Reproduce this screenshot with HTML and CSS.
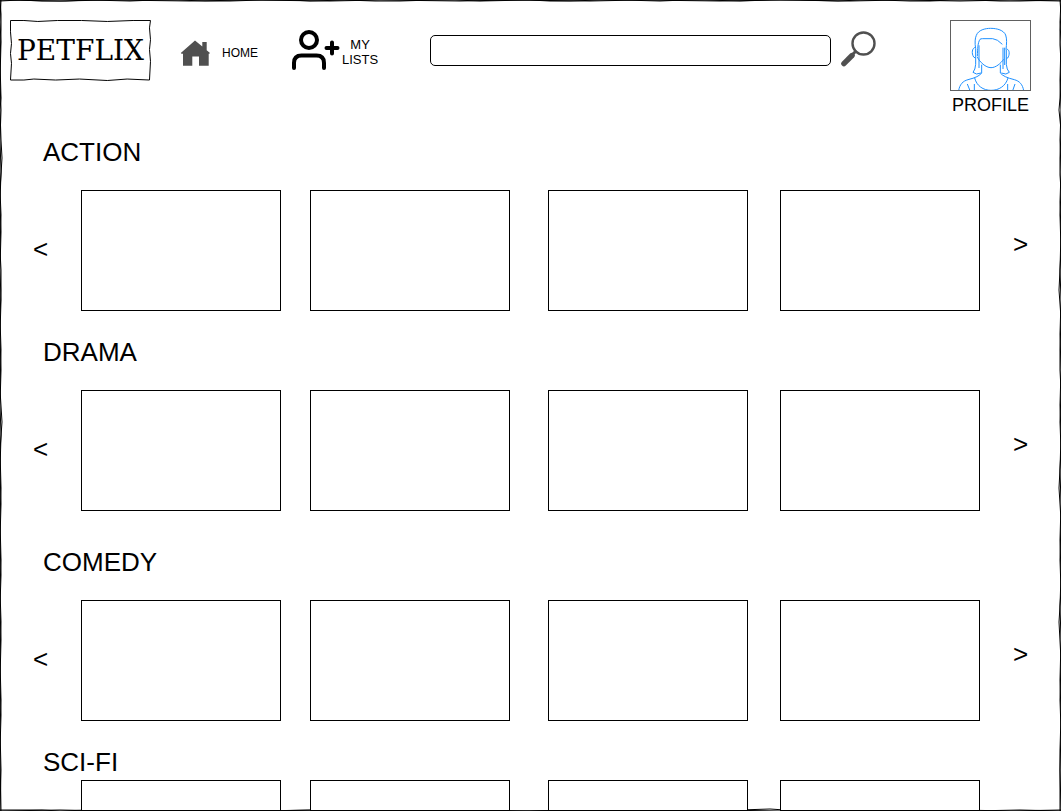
FILE: index.html
```html
<!DOCTYPE html>
<html lang="en">
<head>
<meta charset="utf-8">
<meta name="viewport" content="width=device-width, initial-scale=1">
<title>Petflix</title>
<link rel="stylesheet" href="styles.css">
</head>
<body>
<div class="page">
  <svg class="sketch" viewBox="0 0 1061 811" preserveAspectRatio="none" aria-hidden="true">
    <path d="M0 1 L20 0 42 1 66 1 90 0 130 1 155 0 178 0 205 1 230 1 262 0 290 0 310 1 345 0 375 1 400 1 432 0 455 0 480 1 530 0 550 1 570 1 600 0 622 0 660 1 685 0 705 0 740 1 770 0 800 0 838 1 860 0 880 0 910 1 930 1 950 0 972 0 1000 1 1020 1 1061 0"/>
    <path d="M0 0 L60 1 110 0 190 1 250 0 330 1 380 0 460 1 510 0 590 1 640 0 720 1 780 0 850 1 900 0 960 1 1010 0 1061 1"/>
    <path d="M1060 0 L1061 14 1060 30 1060 45 1061 62 1060 98 1059 110 1061 130 1060 158 1060 175 1061 190 1060 215 1061 250 1059 290 1061 318 1060 350 1060 370 1061 390 1060 422 1061 450 1059 488 1061 520 1060 560 1061 590 1059 622 1061 660 1060 700 1061 730 1060 770 1061 811"/>
    <path d="M1061 0 L1060 22 1061 42 1060 80 1061 110 1060 140 1061 172 1060 202 1061 232 1060 270 1061 300 1060 334 1061 370 1060 405 1061 435 1060 470 1061 504 1060 540 1061 575 1060 606 1061 640 1060 680 1061 715 1060 750 1060 811"/>
    <path d="M0 0 L1 14 1 30 0 62 1 98 0 110 1 140 2 158 0 190 1 215 0 250 1 270 1 290 0 318 1 350 0 390 2 422 0 450 1 488 0 520 1 560 0 590 1 622 0 660 1 700 0 730 1 770 0 811"/>
    <path d="M1 0 L0 22 1 42 0 80 1 110 0 140 1 172 0 202 1 232 0 270 1 300 0 334 1 370 0 405 1 435 0 470 1 504 0 540 1 575 0 606 1 640 0 680 1 715 0 750 1 811"/>
    <path d="M0 810 L42 810 60 811 90 810 130 810 178 811 230 810 262 811 310 810 345 811 400 810 432 811 480 810 530 811 570 810 622 811 660 810 705 811 740 810 770 809 800 811 838 810 880 811 930 810 972 811 1020 810 1061 811"/>
    <path d="M0 811 L60 810 110 811 190 810 250 811 330 810 380 811 460 810 510 811 590 810 640 811 720 810 780 811 850 810 900 811 960 810 1010 811 1061 810"/>
  </svg>

  <header class="header">
    <div class="bar">
      <a class="logo" href="#">
        <svg class="sketch" viewBox="0 0 142 62" preserveAspectRatio="none" aria-hidden="true">
          <path d="M.5 .5 L14 .5 28 1.500 48 .5 72 .5 98 1.500 124 .5 141.500 .5 140.500 8 141.500 20 140.500 30 141.500 42 140.500 61 118 60 98 61.500 70 60 46 61 24 60 14 61 .5 61 1.500 44 .5 34 1.500 24 .5 12Z"/>
        </svg>
        PETFLIX
      </a>
      <nav class="nav" aria-label="Main">
        <a class="nav-link home" href="#">
          <svg width="30" height="26" viewBox="0 0 30 26" aria-hidden="true">
            <path fill="#505050" d="M15 .5 22.300 6.500V2H26.700V10.300L30 12.900 29.200 13.700H28.700V25.700H19V16.500H12.300V25.700H3V13.700H1.500L.8 12.900Z"/>
          </svg>
          <span>HOME</span>
        </a>
        <a class="nav-link lists" href="#">
          <svg width="51" height="42" viewBox="0 0 51 42" fill="none" stroke="#000" stroke-width="4" stroke-linecap="round" aria-hidden="true">
            <circle cx="18" cy="10" r="8"/>
            <path d="M3 38V33Q3 25.500 10.500 25.500H25.500Q33 25.500 33 33V38M41 12.500V23.500M35.500 18H46.500"/>
          </svg>
          <span>MY<br>LISTS</span>
        </a>
      </nav>
      <form class="search" role="search">
        <input class="search-box" type="search" aria-label="Search">
        <button class="search-button" type="submit" aria-label="Search">
          <svg width="36" height="36" viewBox="0 0 36 36" fill="none" stroke="#505050" stroke-linecap="round" aria-hidden="true">
            <circle cx="22.500" cy="12.500" r="11" stroke-width="2.400"/>
            <path stroke-width="3" d="M11.500 23.500 14.500 20.500"/>
            <path stroke-width="5.400" d="M2.900 32.600 11 24.500"/>
          </svg>
        </button>
      </form>
    </div>
    <a class="profile" href="#">
      <svg class="avatar" width="81" height="71" viewBox="30 15 243 213" fill="none" stroke="#1e90ff" stroke-width="3" aria-hidden="true">
        <path d="M107 101C104 83 105 70 109 61C115 45 135 40 152 40C172 40 191 46 197 60C201 72 200 86 198 104"/>
        <path d="M112 124C113 100 113 84 120 73Q122 71 128 71H158Q172 72 187 88"/>
        <path d="M112 126C119 141 137 158 153 158C168 158 182 145 191 133"/>
        <path d="M106 97C96 99 94 115 101 126L106 129M117 91V159M189 98V162M194 98V150M200 102C210 104 209 121 203 129L199 132"/>
        <path d="M107 101V148Q106 164 99 172Q108 181 123 174M199 104V148Q200 164 208 172Q199 181 184 174"/>
        <path d="M56 227C59 208 69 198 84 194Q117 186 125 174V149M251 227C248 208 238 198 223 194Q190 186 181 174V149"/>
        <path d="M104 189C110 213 130 226 153 226C177 226 197 213 204 189M82 207 90 227M103 207V227M225 207 218 227M203 207V227"/>
        <rect x="31.500" y="16.500" width="240" height="210" stroke="#606060"/>
      </svg>
      <span>PROFILE</span>
    </a>
  </header>

  <main>
    <section class="genre">
      <h2 class="genre-title">ACTION</h2>
      <div class="row">
        <button class="arrow prev" type="button" aria-label="Previous action titles">&lt;</button>
        <a class="tile" href="#" aria-label="Action title 1"></a>
        <a class="tile" href="#" aria-label="Action title 2"></a>
        <a class="tile" href="#" aria-label="Action title 3"></a>
        <a class="tile" href="#" aria-label="Action title 4"></a>
        <button class="arrow next" type="button" aria-label="Next action titles">&gt;</button>
      </div>
    </section>
    <section class="genre">
      <h2 class="genre-title">DRAMA</h2>
      <div class="row">
        <button class="arrow prev" type="button" aria-label="Previous drama titles">&lt;</button>
        <a class="tile" href="#" aria-label="Drama title 1"></a>
        <a class="tile" href="#" aria-label="Drama title 2"></a>
        <a class="tile" href="#" aria-label="Drama title 3"></a>
        <a class="tile" href="#" aria-label="Drama title 4"></a>
        <button class="arrow next" type="button" aria-label="Next drama titles">&gt;</button>
      </div>
    </section>
    <section class="genre spaced">
      <h2 class="genre-title">COMEDY</h2>
      <div class="row">
        <button class="arrow prev" type="button" aria-label="Previous comedy titles">&lt;</button>
        <a class="tile" href="#" aria-label="Comedy title 1"></a>
        <a class="tile" href="#" aria-label="Comedy title 2"></a>
        <a class="tile" href="#" aria-label="Comedy title 3"></a>
        <a class="tile" href="#" aria-label="Comedy title 4"></a>
        <button class="arrow next" type="button" aria-label="Next comedy titles">&gt;</button>
      </div>
    </section>
    <section class="genre peek">
      <h2 class="genre-title">SCI-FI</h2>
      <div class="row">
        <a class="tile" href="#" aria-label="Sci-fi title 1"></a>
        <a class="tile" href="#" aria-label="Sci-fi title 2"></a>
        <a class="tile" href="#" aria-label="Sci-fi title 3"></a>
        <a class="tile" href="#" aria-label="Sci-fi title 4"></a>
      </div>
    </section>
  </main>
</div>
</body>
</html>
```
FILE: styles.css
```css
* {
  box-sizing: border-box;
}

body {
  margin: 0;
  background: #fff;
  color: #000;
  font-family: "Liberation Sans", Arial, sans-serif;
}

a {
  color: inherit;
  text-decoration: none;
}

button {
  padding: 0;
  border: 0;
  background: none;
  color: inherit;
  font: inherit;
  cursor: pointer;
}

svg {
  display: block;
  flex: none;
}

.page {
  position: relative;
  min-height: 100vh;
}

/* Hand-drawn outline laid over its parent box */
.sketch {
  position: absolute;
  inset: 0;
  width: 100%;
  height: 100%;
  fill: none;
  stroke: #000;
  stroke-width: 1px;
  stroke-linejoin: round;
  pointer-events: none;
}

.header {
  display: flex;
  align-items: flex-start;
  padding: 20px 30px 0 10px;
}

.bar {
  flex: 1;
  display: flex;
  align-items: center;
}

.logo {
  position: relative;
  padding: 14px 7px;
  font-family: "DejaVu Serif", serif;
  font-size: 28px;
  line-height: 33px;
}

.nav {
  display: flex;
  align-items: center;
  gap: 33px;
  margin: 0 52px 0 29px;
}

.nav-link {
  display: flex;
  align-items: center;
}

.home {
  gap: 12px;
  padding-top: 5px;
  font-size: 12px;
}

.lists {
  font-size: 13px;
  line-height: 15px;
  text-align: center;
}

.lists span {
  padding-top: 2px;
}

.search {
  flex: 1;
  display: flex;
  align-items: center;
  gap: 10px;
  margin-right: 73px;
}

.search-box {
  flex: 1;
  min-width: 0;
  height: 31px;
  padding: 0 8px;
  border: 1px solid #000;
  border-radius: 5px;
  background: #fff;
  font: inherit;
  appearance: none;
}

.search-button {
  padding-bottom: 4px;
}

.profile {
  display: flex;
  flex-direction: column;
  align-items: center;
  gap: 4px;
  font-size: 18px;
  line-height: 20px;
}

.genre {
  padding-top: 26px;
}

.genre:first-child {
  padding-top: 22px;
}

.genre.spaced {
  padding-top: 36px;
}

.genre-title {
  margin: 0 43px 23px;
  font-size: 26px;
  font-weight: 400;
  line-height: 30px;
}

.row {
  display: grid;
  grid-template-columns: 81px 200fr 29fr 200fr 38fr 200fr 32fr 200fr 81px;
}

.tile {
  height: 121px;
  border: 1px solid #000;
  background: #fff;
}

.tile:nth-of-type(1) { grid-column: 2; }
.tile:nth-of-type(2) { grid-column: 4; }
.tile:nth-of-type(3) { grid-column: 6; }
.tile:nth-of-type(4) { grid-column: 8; }

.arrow {
  padding-bottom: 4px;
  font-size: 26px;
  line-height: 30px;
}

.prev {
  grid-column: 1;
}

.next {
  grid-column: 9;
  padding-bottom: 14px;
}

/* Last shelf shows only the top of its tiles */
.peek .genre-title {
  margin-bottom: 3px;
}

.peek .tile {
  position: relative;
  height: 31px;
}
```
